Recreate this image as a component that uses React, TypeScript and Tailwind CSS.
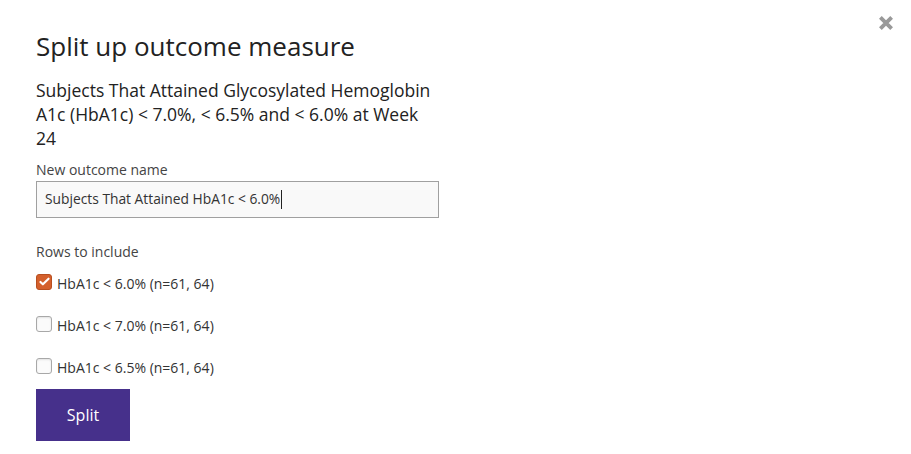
const rows = [
  { label: 'HbA1c < 6.0% (n=61, 64)', checked: true },
  { label: 'HbA1c < 7.0% (n=61, 64)', checked: false },
  { label: 'HbA1c < 6.5% (n=61, 64)', checked: false },
];

const Check = ({ checked }: { checked: boolean }) =>
  checked ? (
    <span className="-mt-[3px] flex h-[16px] w-[16px] items-center justify-center rounded-[3px] bg-[#d4602c] border border-[#b84f20]">
      <svg viewBox="0 0 16 16" className="h-[13px] w-[13px]">
        <path d="M3 8.5l3 3 7-7" stroke="#fff" strokeWidth={2.6} fill="none" strokeLinecap="round" strokeLinejoin="round" />
      </svg>
    </span>
  ) : (
    <span className="-mt-[3px] block h-[16px] w-[16px] rounded-[3px] border border-[#a8a8a8] bg-[#fbfbfb] shadow-[inset_0_1px_2px_rgba(0,0,0,0.1)]" />
  );

export default function App() {
  return (
    <div className="relative min-h-[454px] w-[911px] bg-white text-[#222] [font-family:'Open_Sans',sans-serif]">
      <button className="absolute right-[16px] top-[14px] text-[#999]">
        <svg viewBox="0 0 16 16" className="h-[18px] w-[18px]">
          <path d="M3 3l10 10M13 3L3 13" stroke="currentColor" strokeWidth={3.4} strokeLinecap="butt" />
        </svg>
      </button>
      <div className="flex w-[440px] flex-col pl-[36px] pt-[28px]">
        <h1 className="text-[26px] leading-[36px] text-[#222]">Split up outcome measure</h1>
        <p className="mt-[14px] w-[404px] text-[17.5px] leading-[24px] text-[#222]">
          Subjects That Attained Glycosylated Hemoglobin A1c (HbA1c) &lt; 7.0%, &lt; 6.5% and &lt; 6.0% at Week 24
        </p>
        <label className="mt-[10px] text-[14px] leading-[20px] text-[#444]">New outcome name</label>
        <div className="mt-[1px] flex h-[37px] w-[403px] items-center border border-[#a0a0a0] bg-[#f9f9f9] px-[8px] text-[13.8px] text-[#333]">
          Subjects That Attained HbA1c &lt; 6.0%
          <span className="ml-px inline-block h-[19px] w-px bg-[#222]" />
        </div>
        <div className="mt-[24px] text-[14px] leading-[20px] text-[#444]">Rows to include</div>
        <div className="mt-[11px] flex flex-col gap-[22px]">
          {rows.map((r) => (
            <label key={r.label} className="flex h-[20px] items-center gap-[5px] text-[14px] text-[#333]">
              <Check checked={r.checked} />
              <span>{r.label}</span>
            </label>
          ))}
        </div>
        <button className="mt-[12px] h-[52px] w-[94px] bg-[#46308b] text-[16px] text-white">Split</button>
      </div>
    </div>
  );
}
